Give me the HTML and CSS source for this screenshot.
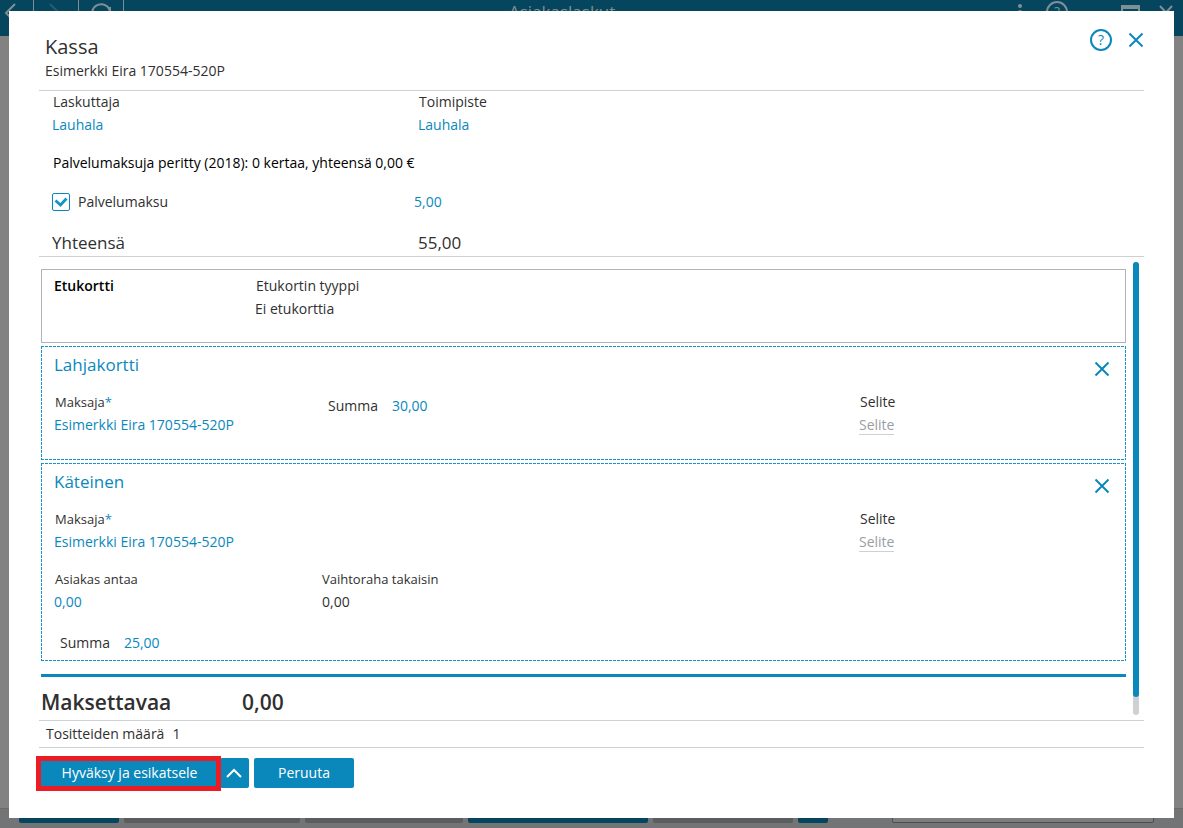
FILE: index.html
```html
<!DOCTYPE html>
<html lang="fi">
<head>
<meta charset="utf-8">
<meta name="viewport" content="width=device-width, initial-scale=1">
<title>Kassa</title>
<link rel="stylesheet" href="styles.css">
</head>
<body>
<div class="stage">
  <div class="app" inert>
    <header class="topbar">
      <nav class="topbar-nav">
        <button class="nav-button" type="button" aria-label="Takaisin"><svg width="18" height="20" viewBox="0 0 18 20"><path d="M14 1 5 10l9 9"/></svg></button>
        <button class="nav-button nav-dim" type="button" aria-label="Eteenpäin"><svg width="18" height="20" viewBox="0 0 18 20"><path d="m3 1 9 9-9 9"/></svg></button>
        <button class="nav-button" type="button" aria-label="Päivitä"><svg width="22" height="20" viewBox="0 0 22 20"><path d="M18 16a9 9 0 1 1 2-7M20 4v6h-6"/></svg></button>
      </nav>
      <span class="topbar-title">Asiakaslaskut</span>
      <div class="topbar-tools">
        <svg width="6" height="20" viewBox="0 0 6 20"><g fill="#7f8f96" stroke="none"><circle cx="3" cy="3" r="2"/><circle cx="3" cy="9" r="2"/><circle cx="3" cy="15" r="2"/></g></svg>
        <span class="help help-dim">?</span>
        <svg class="window-icon" width="19" height="18" viewBox="0 0 19 18"><path d="M1 2v15h17V2"/><path d="M0 2h19" stroke-width="4"/></svg>
        <svg width="14" height="16" viewBox="0 0 14 16"><path d="m1 1 12 13M13 1 1 14"/></svg>
      </div>
    </header>
    <div class="bottombar">
      <span class="ghost ghost-blue ghost-s"></span>
      <span class="ghost ghost-l"></span>
      <span class="ghost ghost-m"></span>
      <span class="ghost ghost-blue ghost-xl"></span>
      <span class="ghost ghost-n"></span>
      <span class="ghost ghost-blue ghost-xs"></span>
      <span class="ghost ghost-field"></span>
    </div>
  </div>

  <main class="dialog" role="dialog" aria-labelledby="dialog-title">
    <header class="dialog-header">
      <div>
        <h1 class="dialog-title" id="dialog-title">Kassa</h1>
        <p class="dialog-subtitle">Esimerkki Eira 170554-520P</p>
      </div>
      <div class="dialog-tools">
        <button class="help" type="button" aria-label="Ohje">?</button>
        <button class="icon-button" type="button" aria-label="Sulje"><svg width="16" height="16" viewBox="0 0 16 16"><path d="m1.500 1.500 13 13M14.500 1.500l-13 13"/></svg></button>
      </div>
    </header>

    <section class="summary">
      <dl class="summary-pair">
        <div class="field"><dt class="nudge">Laskuttaja</dt><dd><a class="link" href="#">Lauhala</a></dd></div>
        <div class="field"><dt class="nudge">Toimipiste</dt><dd><a class="link" href="#">Lauhala</a></dd></div>
      </dl>
      <p class="summary-note nudge">Palvelumaksuja peritty (2018): 0 kertaa, yhteensä 0,00 €</p>
      <div class="fee">
        <label class="check"><input class="check-box" type="checkbox" checked>Palvelumaksu</label>
        <input class="value" type="text" value="5,00" aria-label="Palvelumaksun summa">
      </div>
      <div class="total"><span>Yhteensä</span><span>55,00</span></div>
    </section>

    <div class="scroll">
      <div class="scroll-content">
        <section class="card card-benefit">
          <h2 class="card-label">Etukortti</h2>
          <dl class="field"><dt class="nudge">Etukortin tyyppi</dt><dd>Ei etukorttia</dd></dl>
        </section>

        <section class="card card-payment">
          <div class="card-head">
            <h2 class="card-title">Lahjakortti</h2>
            <button class="icon-button" type="button" aria-label="Poista lahjakortti"><svg width="16" height="16" viewBox="0 0 16 16"><path d="m1.500 1.500 13 13M14.500 1.500l-13 13"/></svg></button>
          </div>
          <div class="payment-row">
            <div class="field"><span class="small nudge">Maksaja<span class="required">*</span></span><a class="link" href="#">Esimerkki Eira 170554-520P</a></div>
            <div class="amount amount-top"><label for="gift-sum">Summa</label><input class="value" id="gift-sum" type="text" value="30,00"></div>
            <div class="field field-note"><span class="nudge">Selite</span><a class="placeholder" href="#">Selite</a></div>
          </div>
        </section>

        <section class="card card-payment card-cash">
          <div class="card-head">
            <h2 class="card-title">Käteinen</h2>
            <button class="icon-button" type="button" aria-label="Poista käteinen"><svg width="16" height="16" viewBox="0 0 16 16"><path d="m1.500 1.500 13 13M14.500 1.500l-13 13"/></svg></button>
          </div>
          <div class="payment-row">
            <div class="field"><span class="small nudge">Maksaja<span class="required">*</span></span><a class="link" href="#">Esimerkki Eira 170554-520P</a></div>
            <div></div>
            <div class="field field-note"><span class="nudge">Selite</span><a class="placeholder" href="#">Selite</a></div>
          </div>
          <div class="cash-row">
            <div class="field"><label class="small nudge" for="given">Asiakas antaa</label><input class="value" id="given" type="text" value="0,00"></div>
            <div class="field"><span class="small">Vaihtoraha takaisin</span><span>0,00</span></div>
          </div>
          <div class="amount amount-cash"><label for="cash-sum">Summa</label><input class="value" id="cash-sum" type="text" value="25,00"></div>
        </section>

        <div class="payable"><span>Maksettavaa</span><span>0,00</span></div>
      </div>
      <div class="track"><div class="thumb"></div></div>
    </div>

    <p class="receipts"><span>Tositteiden määrä</span><span>1</span></p>

    <footer class="actions">
      <div class="split">
        <button class="button button-main" type="button">Hyväksy ja esikatsele</button>
        <button class="button button-more" type="button" aria-label="Lisää vaihtoehtoja"><svg width="16" height="10" viewBox="0 0 16 10"><path d="m1 9 7-7 7 7"/></svg></button>
      </div>
      <button class="button button-cancel" type="button">Peruuta</button>
    </footer>
  </main>
</div>
</body>
</html>
```
FILE: styles.css
```css
:root {
  --blue: #0a88bb;
  --text: #303030;
  --line: #cdd1d4;
  --dimmed: #7f8f96;
}

* { box-sizing: border-box; }

body {
  margin: 0;
  color: var(--text);
  font: 14px/20px "Open Sans", "Noto Sans", sans-serif;
}

h1, h2, p, dl, dd { margin: 0; font-weight: 400; }

button, input { font: inherit; }

svg {
  display: block;
  fill: none;
  stroke: currentColor;
  stroke-width: 2;
}

.stage { display: grid; min-height: 100vh; }
.stage > * { grid-area: 1 / 1; min-width: 0; }

/* Dimmed application behind the dialog */
.app {
  display: flex;
  flex-direction: column;
  justify-content: space-between;
  background: #828282;
}

.topbar {
  display: flex;
  justify-content: space-between;
  height: 36px;
  padding-right: 10px;
  background: #05465e;
  color: var(--dimmed);
}

.topbar-nav { display: flex; }

.nav-button {
  display: flex;
  justify-content: center;
  width: 45px;
  padding: 3px 0 0;
  border: 0;
  border-right: 1px solid var(--dimmed);
  background: none;
  color: inherit;
}
.nav-button:first-child { width: 34px; padding-right: 14px; }
.nav-dim svg { stroke: #2a5c6e; }

.topbar-title {
  flex: 1;
  padding: 0 20px;
  margin-left: 365px;
  font-size: 17px;
  line-height: 24px;
}

.topbar-tools { display: flex; align-items: flex-start; padding-top: 3px; }
.topbar-tools .help-dim { margin: -2px 53px 0 23px; }
.topbar-tools .window-icon { margin: 2px 19px 0 0; }
.topbar-tools svg:last-child { margin-top: 2px; }

.bottombar {
  display: flex;
  gap: 5px;
  padding: 0 29px 5px 19px;
  border-top: 1px solid #6a6b6e;
  background: #737476;
}
.ghost { height: 14px; border-radius: 0 0 2px 2px; background: #5c5d5f; }
.ghost-blue { background: #05465e; }
.ghost-xs { width: 30px; }
.ghost-s { width: 100px; }
.ghost-n { width: 140px; }
.ghost-m { width: 158px; }
.ghost-l { width: 176px; }
.ghost-xl { width: 180px; }
.ghost-field { width: 262px; margin-left: auto; border: 1px solid #4c4d50; background: #7d7d7d; }

/* Dialog */
.dialog {
  margin: 11px 9px 10px;
  padding: 0 30px;
  background: #fff;
}

.dialog-header {
  display: flex;
  justify-content: space-between;
  padding: 22px 0 9px 6px;
  border-bottom: 1px solid var(--line);
}
.dialog-title { font-size: 20px; line-height: 28px; }
.dialog-tools { display: flex; align-items: center; gap: 16px; height: 14px; }

.help {
  display: flex;
  align-items: center;
  justify-content: center;
  width: 22px;
  height: 22px;
  padding: 0;
  border: 2px solid currentColor;
  border-radius: 50%;
  background: none;
  color: var(--blue);
  font-size: 14px;
  line-height: 18px;
}
.help-dim { color: var(--dimmed); }

.icon-button { padding: 0; border: 0; background: none; color: var(--blue); }

.nudge { padding-left: 1px; }
.small { font-size: 13px; }
.link { color: var(--blue); text-decoration: none; }
.required { color: var(--blue); }

.field { display: flex; flex-direction: column; gap: 3px; align-items: flex-start; }

.value {
  width: 60px;
  height: 20px;
  padding: 0;
  border: 0;
  background: none;
  color: var(--blue);
}

.placeholder {
  border-bottom: 1px solid var(--line);
  color: #9a9ea3;
  line-height: 19px;
  text-decoration: none;
}

.summary { padding: 1px 0 1px 13px; border-bottom: 1px solid var(--line); }
.summary-pair { display: grid; grid-template-columns: 366px 1fr; }
.summary-note { margin-top: 18px; color: #000; }
.fee { display: grid; grid-template-columns: 362px 1fr; margin-top: 19px; }
.total {
  display: grid;
  grid-template-columns: 366px 1fr;
  margin-top: 19px;
  font-size: 17px;
  line-height: 24px;
}

.check { display: flex; align-items: center; gap: 8px; }
.check-box {
  appearance: none;
  width: 18px;
  height: 18px;
  margin: 0;
  border: 1px solid var(--blue);
  border-radius: 2px;
  background: url("data:image/svg+xml,%3Csvg xmlns='http://www.w3.org/2000/svg' viewBox='0 0 16 16'%3E%3Cpath d='M2.500 6.500l5 4.500 6-6.500' fill='none' stroke='%231593c8' stroke-width='2.800'/%3E%3C/svg%3E");
}

/* Scrolling payment list */
.scroll { display: flex; gap: 7px; padding: 5px 5px 0 2px; border-bottom: 1px solid var(--line); }
.scroll-content { flex: 1; min-width: 0; padding-top: 7px; }
.track { width: 6px; margin-bottom: 5px; border-radius: 3px; background: var(--line); }
.thumb { height: 96%; border-radius: 3px; background: var(--blue); }

.card { margin-bottom: 3px; border: 1px solid #b0b4b8; padding: 6px 15px 24px 12px; }
.card-benefit { display: grid; grid-template-columns: 201px 1fr; padding-bottom: 23px; }
.card-label { color: #000; font-size: 14px; font-weight: 600; }

/* Dashed frame: 3px dashes with 1px gaps */
.card-payment {
  --dash: #1593c8 0 3px, transparent 3px 4px;
  border-color: transparent;
  background:
    repeating-linear-gradient(90deg, var(--dash)) top / 100% 1px no-repeat border-box,
    repeating-linear-gradient(90deg, var(--dash)) bottom / 100% 1px no-repeat border-box,
    repeating-linear-gradient(180deg, var(--dash)) left / 1px 100% no-repeat border-box,
    repeating-linear-gradient(180deg, var(--dash)) right / 1px 100% no-repeat border-box;
}
.card-head { display: flex; align-items: center; justify-content: space-between; }
.card-head .icon-button { padding-top: 8px; }
.card-title { color: var(--blue); font-size: 17px; line-height: 24px; }

.payment-row { display: grid; grid-template-columns: 274px 1fr 251px; margin-top: 15px; }
.amount { display: flex; gap: 14px; }
.amount-top { padding-top: 4px; }

.card-cash { margin-bottom: 13px; padding-bottom: 7px; }
.cash-row { display: grid; grid-template-columns: 268px 1fr; margin-top: 17px; }
.amount-cash { margin-top: 21px; padding-left: 6px; }

.payable {
  display: grid;
  grid-template-columns: 201px 1fr;
  padding: 10px 0 3px;
  border-top: 3px solid var(--blue);
  font-size: 21px;
  font-weight: 600;
  line-height: 30px;
}

.receipts {
  display: flex;
  gap: 8px;
  padding-left: 7px;
  border-bottom: 1px solid var(--line);
  line-height: 26px;
}

.actions { display: flex; gap: 5px; padding: 10px 0 30px; }
.split { display: flex; }

.button {
  height: 30px;
  padding: 0;
  border: 0;
  border-radius: 2px;
  background: var(--blue);
  color: #fff;
}
.button-main { position: relative; width: 181px; }
.button-main::after {
  content: "";
  position: absolute;
  inset: -2px -1px -3px -3px;
  border: 5px solid #ed1c24;
}
.button-more { display: grid; place-items: center; width: 29px; padding-right: 2px; }
.button-cancel { width: 100px; }
```
